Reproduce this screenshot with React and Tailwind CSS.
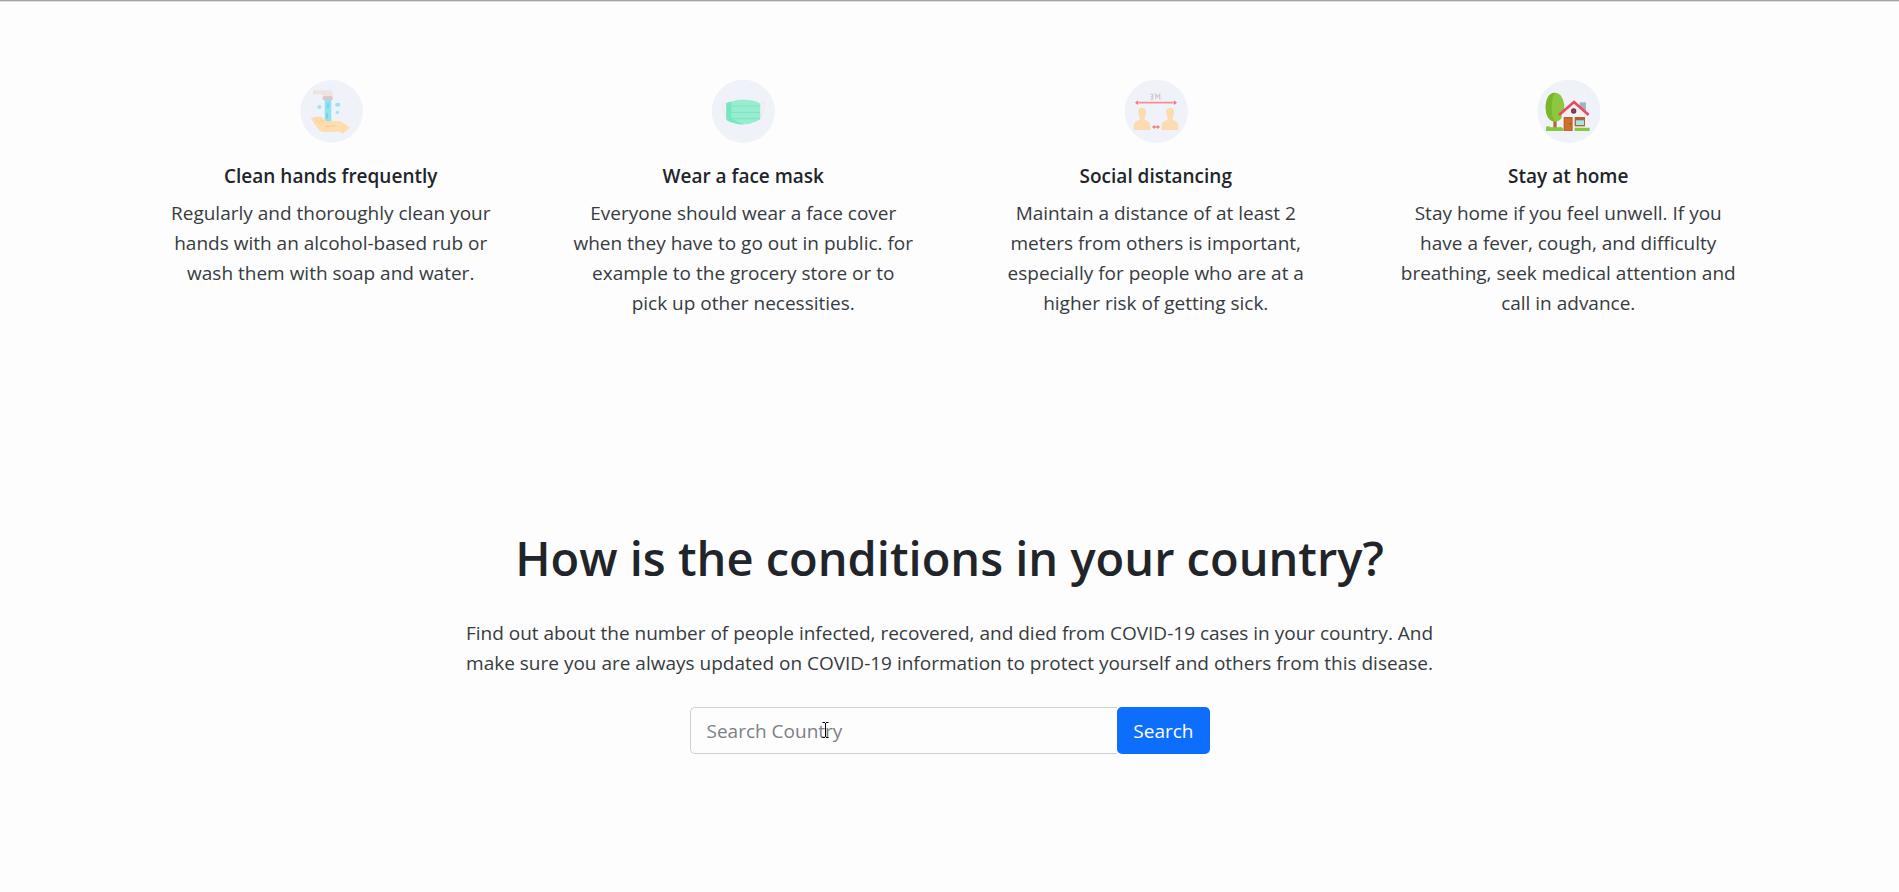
function HandsIcon() {
  return (
    <svg viewBox="28 30 192 192" className="size-16" aria-hidden="true">
      <circle cx="126" cy="124" r="94" fill="#eff3f9" />
      <path d="M70 61H124Q129 62 129 69V80H101V76Q100 73 95 73H70Z" fill="#eee3e1" />
      <rect x="99" y="79" width="30" height="11" rx="2" fill="#d3c8cb" />
      <path d="M105 90H125V154H105Z" fill="#8fe3ec" />
      <path d="M115 99V114M112 130V145" stroke="#5fcfe0" strokeWidth="4" />
      <g fill="#9de3f0">
        <ellipse cx="89" cy="111" rx="6" ry="6" />
        <ellipse cx="144" cy="104" rx="8" ry="6" />
        <circle cx="143" cy="127" r="5" />
      </g>
      <path d="M64 146Q68 140 75 143Q79 137 87 141Q95 136 101 145Q107 148 109 153H139Q149 151 157 157L181 173L159 191L147 184Q139 187 126 186H101Q91 185 85 176Z" fill="#fddcae" />
      <path d="M75 145L91 160M87 142L101 157M108 168H137" stroke="#f8cb99" strokeWidth="3" fill="none" />
    </svg>
  );
}

function MaskIcon() {
  return (
    <svg viewBox="24 30 192 192" className="size-16" aria-hidden="true">
      <circle cx="121" cy="124" r="95" fill="#eff3f9" />
      <path d="M71 100L58 96V112L69 141M171 100L184 96V112L173 141" stroke="#efe6e8" strokeWidth="3" fill="none" />
      <path d="M70 101Q71 97 83 95Q119 82 158 94Q169 97 172 102V145Q171 151 158 155Q121 171 85 157Q71 152 70 146Z" fill="#98edd1" />
      <path d="M70 101Q72 97 85 95V143Q98 154 121 164Q100 163 85 157Q71 152 70 146Z" fill="#77e4c2" />
      <path d="M85 108H171M71 127H171M85 146H171" stroke="#7ce2c4" strokeWidth="3" />
    </svg>
  );
}

function DistanceIcon() {
  return (
    <svg viewBox="24 30 192 192" className="size-16" aria-hidden="true">
      <circle cx="121" cy="124" r="95" fill="#eff3f9" />
      <path d="M103 73H110V87H103M104 80H110M119 88V73L125 80L131 73V88M136 87H138" stroke="#d8caca" strokeWidth="4" fill="none" />
      <path d="M60 98H180" stroke="#f58d91" strokeWidth="5" />
      <path d="M57 98L66 91V105ZM183 98L174 91V105Z" fill="#f27d83" />
      <path d="M112 171H128" stroke="#f58d91" strokeWidth="5" />
      <path d="M108 171L116 164V178ZM132 171L124 164V178Z" fill="#f27d83" />
      <g fill="#fddbb0">
        <path d="M78 113C70 113 66 119 66 127Q66 136 71 141V149Q53 153 53 168V180H103V168Q102 153 86 149V141Q91 136 91 127C91 119 86 113 78 113Z" />
        <path d="M162 113C154 113 150 119 150 127Q150 136 155 141V149Q137 153 137 168V180H187V168Q186 153 170 149V141Q175 136 175 127C175 119 170 113 162 113Z" />
      </g>
    </svg>
  );
}

function HomeIcon() {
  return (
    <svg viewBox="22 30 192 192" className="size-16" aria-hidden="true">
      <circle cx="121" cy="124" r="95" fill="#eff3f9" />
      <path d="M74 135H84V178H74Z" fill="#b9683a" />
      <path d="M79 68C60 68 51 89 51 112C51 138 62 155 79 155C97 155 107 138 107 112C107 89 96 68 79 68Z" fill="#8dc63f" />
      <path d="M79 68C60 68 51 89 51 112C51 138 62 155 79 155C66 142 66 84 79 68Z" fill="#7ab62c" />
      <path d="M153 97H172V126H153Z" fill="#a5b3bf" />
      <path d="M136 99L99 132V183H172V132Z" fill="#f2f0f3" />
      <path d="M91 135L136 96L180 135" stroke="#e84b63" strokeWidth="8" fill="none" />
      <circle cx="135" cy="123" r="8" fill="#75364a" />
      <circle cx="135" cy="123" r="3" fill="#ad4a5c" />
      <rect x="105" y="141" width="27" height="42" fill="#bd6328" />
      <rect x="109" y="145" width="19" height="37" fill="#cc712e" />
      <circle cx="125" cy="161" r="2" fill="#733b25" />
      <rect x="138" y="141" width="31" height="28" fill="#ad652f" />
      <rect x="142" y="151" width="24" height="14" fill="#a9e1f4" />
      <path d="M52 183V170Q59 166 66 172H90Q99 169 104 176V183ZM138 183V173H183V183Z" fill="#87c83c" />
    </svg>
  );
}

const tips = [
  {
    title: "Clean hands frequently",
    Icon: HandsIcon,
    lines: ["Regularly and thoroughly clean your", "hands with an alcohol-based rub or", "wash them with soap and water."],
  },
  {
    title: "Wear a face mask",
    Icon: MaskIcon,
    lines: ["Everyone should wear a face cover", "when they have to go out in public. for", "example to the grocery store or to", "pick up other necessities."],
  },
  {
    title: "Social distancing",
    Icon: DistanceIcon,
    lines: ["Maintain a distance of at least 2", "meters from others is important,", "especially for people who are at a", "higher risk of getting sick."],
  },
  {
    title: "Stay at home",
    Icon: HomeIcon,
    lines: ["Stay home if you feel unwell. If you", "have a fever, cough, and difficulty", "breathing, seek medical attention and", "call in advance."],
  },
];

function Lines({ lines }) {
  return lines.map((line) => (
    <span key={line} className="block">
      {line}{" "}
    </span>
  ));
}

export default function App() {
  return (
    <main className="min-h-screen border-t border-[#a3a3a3] bg-[#fdfdfd] pb-32 font-['Segoe_UI','Open_Sans',sans-serif] text-[19px] leading-[30px] text-[#212529]">
      <div className="border-t border-[#dedede]">
        <section className="mx-auto grid max-w-[1650px] grid-cols-1 pt-[78px] sm:grid-cols-2 lg:grid-cols-4">
          {tips.map(({ title, Icon, lines }) => (
            <article key={title} className="flex flex-col items-center px-4 text-center">
              <Icon />
              <h2 className="mt-5 leading-6 font-semibold">{title}</h2>
              <p className="mt-[10px] text-[#373b3f]">
                <Lines lines={lines} />
              </p>
            </article>
          ))}
        </section>
      </div>

      <section className="mt-[210px] flex flex-col items-center px-4 text-center">
        <h1 className="text-[47px] leading-[60px] font-semibold">How is the conditions in your country?</h1>
        <p className="mt-[30px] text-[#373b3f]">
          <Lines
            lines={[
              "Find out about the number of people infected, recovered, and died from COVID-19 cases in your country. And",
              "make sure you are always updated on COVID-19 information to protect yourself and others from this disease.",
            ]}
          />
        </p>
        <form className="mt-[29px] flex w-[520px] max-w-full" onSubmit={(e) => e.preventDefault()}>
          <div className="relative min-w-0 flex-1">
            <input
              type="text"
              aria-label="Search Country"
              placeholder="Search Country"
              className="h-[47px] w-full rounded-l-[5px] border border-r-0 border-[#ced0d2] bg-[#fdfdfd] px-4 outline-none placeholder:text-[#7b8187]"
            />
            <svg viewBox="0 0 7 16" className="pointer-events-none absolute top-[15px] left-[132px] h-4 w-[7px]" aria-hidden="true">
              <path d="M0.5 0.5H3M4 0.5H6.5M3.5 1V15M0.5 15.5H3M4 15.5H6.5" stroke="#000" fill="none" />
            </svg>
          </div>
          <button type="submit" className="h-[47px] rounded-[5px] bg-[#0d6efd] px-4 text-white">
            Search
          </button>
        </form>
      </section>
    </main>
  );
}
